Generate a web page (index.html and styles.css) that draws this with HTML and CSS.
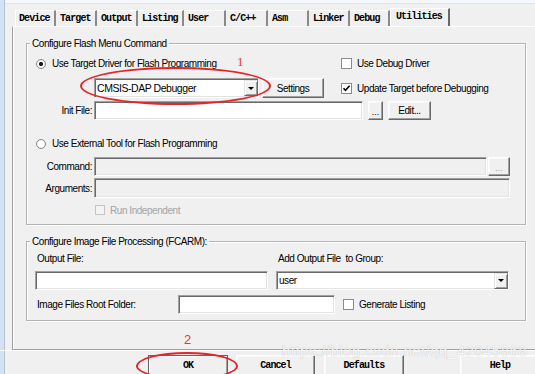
FILE: index.html
```html
<!DOCTYPE html>
<html lang="en">
<head>
  <meta charset="UTF-8" />
  <meta name="viewport" content="width=device-width, initial-scale=1.0"/>
  <title>Options for Target - Utilities</title>
  <link rel="stylesheet" href="styles.css">
</head>
<body>

<div class="window">
  <div class="tabs">
    <div class="tab first">Device</div>
    <div class="tab">Target</div>
    <div class="tab">Output</div>
    <div class="tab wide">Listing</div>
    <div class="tab mid">User</div>
    <div class="tab mid">C/C++</div>
    <div class="tab">Asm</div>
    <div class="tab">Linker</div>
    <div class="tab narrow">Debug</div>
    <div class="tab active">Utilities</div>
  </div>

  <div class="panel">
    <div class="group flash">
      <div class="group-title">Configure Flash Menu Command</div>

      <div class="row row-driver">
        <div class="main">
          <label class="opt"><span class="radio checked"></span>Use Target Driver for Flash Programming</label>
        </div>
        <label class="opt"><span class="check"></span>Use Debug Driver</label>
      </div>

      <div class="row row-debugger">
        <div class="main">
          <div class="field select debugger">CMSIS-DAP Debugger<span class="arrow"></span></div>
          <div class="btn settings">Settings</div>
        </div>
        <label class="opt">
          <span class="check"><svg width="9" height="9" viewBox="0 0 9 9"><polyline points="1.5,4.2 3.5,6.4 7.6,1.8" fill="none" stroke="#000" stroke-width="1.6"/></svg></span>Update Target before Debugging
        </label>
      </div>

      <div class="row row-init">
        <span class="label">Init File:</span>
        <div class="field init"></div>
        <div class="btn dots">...</div>
        <div class="btn edit">Edit...</div>
      </div>

      <div class="row row-external">
        <label class="opt"><span class="radio"></span>Use External Tool for Flash Programming</label>
      </div>

      <div class="row row-command">
        <span class="label">Command:</span>
        <div class="field off command"></div>
        <div class="btn dots off browse">...</div>
      </div>

      <div class="row row-args">
        <span class="label">Arguments:</span>
        <div class="field off args"></div>
      </div>

      <div class="row row-indep">
        <label class="opt off"><span class="check off"></span>Run Independent</label>
      </div>
    </div>

    <div class="group image">
      <div class="group-title">Configure Image File Processing (FCARM):</div>

      <div class="image-grid">
        <span class="caption">Output File:</span>
        <span class="caption">Add Output File&nbsp; to Group:</span>
        <div class="field"></div>
        <div class="field select">user<span class="arrow"></span></div>
      </div>

      <div class="row row-root">
        <span class="root-label">Image Files Root Folder:</span>
        <div class="field root"></div>
        <label class="opt"><span class="check"></span>Generate Listing</label>
      </div>
    </div>
  </div>

  <div class="footer">
    <div class="btn big ok">OK</div>
    <div class="btn big cancel">Cancel</div>
    <div class="btn big defaults">Defaults</div>
    <div class="btn big help">Help</div>
  </div>

  <!-- annotations drawn on top of the screenshot -->
  <div class="ring ring-1"></div>
  <div class="num num-1">1</div>
  <div class="ring ring-2"></div>
  <div class="num num-2">2</div>
  <div class="watermark">https://blog.csdn.net/qq_42045868</div>
</div>

</body>
</html>
```

FILE: styles.css
```css
html,
body {
  margin: 0;
}

body {
  width: 535px;
  height: 374px;
  overflow: hidden;
  background: #f0f0f0;
  font-family: "Liberation Sans", Arial, sans-serif;
  font-size: 10px;
  letter-spacing: -0.45px;
  color: #000;
}

.window {
  position: relative;
  width: 535px;
  height: 374px;
  box-sizing: border-box;
  padding-top: 10px;
  overflow: hidden;
  box-shadow: inset 4px 0 0 #d3e2f2, inset 5px 0 0 #b5c3d1, inset 0 3px 0 #f4f8fc, inset 0 4px 0 #dde4eb;
}

/* tab strip */
.tabs {
  display: flex;
  height: 16px;
  margin-left: 15px;
  font-family: "Liberation Mono", monospace;
  font-size: 10px;
  font-weight: bold;
  letter-spacing: -0.9px;
}

.tab {
  box-sizing: border-box;
  width: 41px;
  height: 16px;
  padding: 2px 0 0 4px;
  line-height: 11px;
  border-top: 1px solid #fff;
  border-right: 2px solid #8a8a8a;
  white-space: nowrap;
}

.tab.first {
  border-left: 1px solid #fff;
  padding-left: 3px;
}

.tab.wide { width: 46px; }
.tab.mid { width: 42px; }
.tab.narrow { width: 40px; }

.tab.active {
  width: 60px;
  height: 18px;
  margin-top: -2px;
  padding: 2px 0 0 5px;
  border-left: 1px solid #fff;
  border-right-color: #696969;
}

/* page below the tabs */
.panel {
  box-sizing: border-box;
  width: 523px;
  height: 324px;
  margin-left: 12px;
  padding: 16px 0 0 13px;
  border-top: 1px solid #fff;
  border-left: 1px solid #a0a0a0;
  border-bottom: 1px solid #a0a0a0;
  box-shadow: inset 1px 0 0 #fff;
}

.group {
  box-sizing: border-box;
  width: 500px;
  border: 1px solid #b4b4b4;
  box-shadow: 1px 1px 0 #fff, inset 1px 1px 0 #fff;
}

.flash { height: 182px; }

.image {
  height: 80px;
  margin-top: 16px;
}

.group-title {
  width: max-content;
  height: 13px;
  line-height: 13px;
  margin: -7px 0 0 3px;
  padding: 0 2px;
  background: #f0f0f0;
}

.row {
  display: flex;
  align-items: center;
}

.main {
  display: flex;
  align-items: center;
  width: 314px;
}

.opt {
  display: flex;
  align-items: center;
  white-space: nowrap;
}

.opt.off { color: #a3a3a3; }

.label {
  box-sizing: border-box;
  width: 67px;
  padding-right: 2px;
  text-align: right;
}

.row-driver { height: 13px; margin-top: 7px; }
.row-debugger { height: 20px; margin-top: 8px; }
.row-init { height: 19px; margin-top: 3px; }
.row-external { height: 13px; margin-top: 17px; }
.row-command { height: 19px; margin-top: 7px; }
.row-args { height: 20px; margin-top: 2px; }
.row-indep { height: 12px; margin-top: 6px; padding-left: 68px; }

/* controls */
.radio {
  box-sizing: border-box;
  flex: none;
  width: 10px;
  height: 10px;
  margin: 0 6px 0 9px;
  border: 1px solid #8a8b8c;
  border-radius: 50%;
  background: radial-gradient(circle, #fff 0 3px, #e6e6e6 4px);
}

.radio.checked {
  background: radial-gradient(circle, #1c1c1c 0 1.8px, #fff 2.4px 3px, #e6e6e6 4px);
}

.check {
  box-sizing: border-box;
  display: flex;
  align-items: center;
  justify-content: center;
  flex: none;
  width: 11px;
  height: 11px;
  margin-right: 5px;
  border: 1px solid #8a8b8c;
  background: #fff;
}

.check.off {
  width: 10px;
  height: 10px;
  border-color: #c4c4c4;
  background: #f4f4f4;
}

.field {
  box-sizing: border-box;
  display: flex;
  align-items: center;
  height: 19px;
  padding-left: 2px;
  background: #fff;
  border: 1px solid;
  border-color: #a0a0a0 #fff #fff #a0a0a0;
  box-shadow: inset 1px 1px 0 #696969, inset -1px -1px 0 #e3e3e3;
  white-space: nowrap;
}

.field.off { background: #f0f0f0; }

.select .arrow {
  box-sizing: border-box;
  display: flex;
  align-items: center;
  justify-content: center;
  width: 14px;
  height: 16px;
  margin-left: auto;
  background: #f0f0f0;
  border: 1px solid;
  border-color: #e3e3e3 #696969 #696969 #e3e3e3;
  box-shadow: inset 1px 1px 0 #fff, inset -1px -1px 0 #a0a0a0;
}

.select .arrow::after {
  content: "";
  border-left: 3px solid transparent;
  border-right: 3px solid transparent;
  border-top: 3px solid #000;
}

.debugger {
  width: 165px;
  height: 20px;
  margin-left: 67px;
  font-size: 10.5px;
}

.init { width: 269px; }
.command { width: 393px; }
.args { width: 416px; height: 20px; }

.btn {
  box-sizing: border-box;
  display: flex;
  align-items: center;
  justify-content: center;
  flex: none;
  background: #f0f0f0;
  border: 1px solid;
  border-color: #fff #696969 #696969 #fff;
  box-shadow: inset -1px -1px 0 #a0a0a0, inset 1px 1px 0 #f8f8f8;
  white-space: nowrap;
}

.btn.off { color: #a0a0a0; }

.settings {
  width: 62px;
  height: 20px;
  margin-left: 3px;
}

.dots {
  width: 15px;
  height: 19px;
  margin-left: 5px;
  letter-spacing: 0;
  font-size: 9px;
  padding-top: 3px;
}

.edit {
  width: 43px;
  height: 19px;
  margin-left: 5px;
}

.browse {
  width: 22px;
  margin-left: 1px;
}

/* image file processing */
.image-grid {
  display: grid;
  grid-template-columns: 233px 233px;
  grid-template-rows: 12px 19px;
  column-gap: 8px;
  row-gap: 6px;
  margin: 5px 0 0 8px;
}

.caption {
  padding-left: 2px;
  line-height: 12px;
  white-space: nowrap;
}

.row-root {
  height: 19px;
  margin: 5px 0 0 8px;
}

.root-label {
  box-sizing: border-box;
  width: 143px;
  padding-left: 2px;
}

.root {
  width: 157px;
  margin-right: 8px;
}

/* dialog buttons */
.footer {
  display: flex;
  overflow: hidden;
  padding-top: 4px;
  border-top: 1px solid #fff;
  font-family: "Liberation Mono", monospace;
  font-size: 10px;
  font-weight: bold;
  letter-spacing: -0.9px;
}

.big {
  width: 80px;
  height: 22px;
  padding-bottom: 2px;
}

.ok {
  margin-left: 148px;
  border-color: #646464;
  box-shadow: inset 1px 1px 0 #fff, inset -1px -1px 0 #a0a0a0;
}

.cancel { width: 79px; margin-left: 8px; }
.defaults { margin-left: 9px; }
.help { margin-left: 56px; }

/* red marks and watermark on top of the capture */
.ring {
  position: absolute;
  box-sizing: border-box;
  border: 2px solid #e4252b;
  border-radius: 50%;
}

.ring-1 {
  left: 80px;
  top: 67px;
  width: 191px;
  height: 38px;
}

.ring-2 {
  left: 136px;
  top: 352px;
  width: 102px;
  height: 28px;
}

.num {
  position: absolute;
  line-height: 1;
  color: #e43a36;
  letter-spacing: 0;
}

.num-1 {
  left: 237px;
  top: 55px;
  font-family: "Liberation Serif", serif;
  font-size: 13px;
}

.num-2 {
  left: 184px;
  top: 333px;
  font-size: 13px;
}

.watermark {
  position: absolute;
  left: 282px;
  top: 342px;
  font-size: 15px;
  letter-spacing: 0.45px;
  color: rgba(255, 255, 255, 0.92);
  text-shadow: 0 0 1px rgba(0, 0, 0, 0.3);
  white-space: nowrap;
}
```
